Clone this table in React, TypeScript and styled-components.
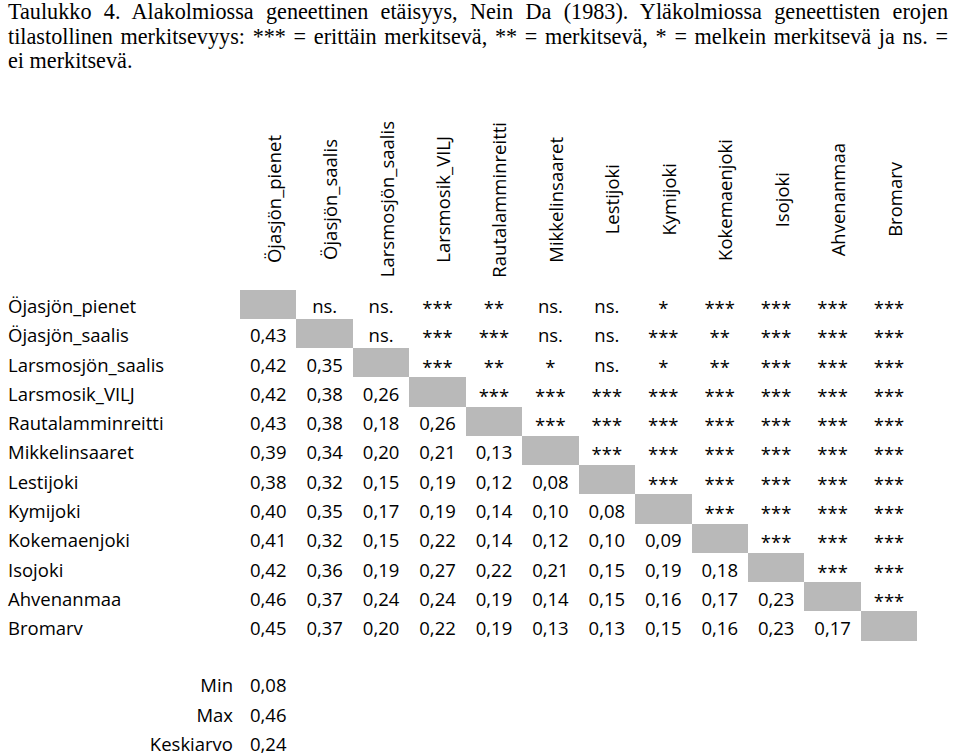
import React from "react";
import styled, { createGlobalStyle } from "styled-components";

const GlobalStyle = createGlobalStyle`
  html, body { margin: 0; padding: 0; background: #ffffff; }
  body { color: #000000; }
`;

const COL_W = 56.45;
const ROW_H = 29.27;

const Page = styled.div`
  width: 960px;
  box-sizing: border-box;
  padding-left: 8px;
`;

const Caption = styled.div`
  font-family: "Liberation Serif", "Times New Roman", serif;
  font-size: 22.2px;
  line-height: 24.5px;
  width: 940px;
`;

const CaptionLine = styled.div<{ $justify?: boolean }>`
  text-align: ${(p) => (p.$justify ? "justify" : "left")};
  text-align-last: ${(p) => (p.$justify ? "justify" : "left")};
`;

const Grid = styled.div<{ $top: number }>`
  display: grid;
  grid-template-columns: 232px repeat(12, ${COL_W}px);
  grid-auto-rows: ${ROW_H}px;
  margin-top: ${(p) => p.$top}px;
  font-family: "Open Sans", "Noto Sans", sans-serif;
  font-size: 18.5px;
  line-height: 18px;
`;

const HeaderRow = styled.div`
  display: grid;
  grid-template-columns: 232px repeat(12, ${COL_W}px);
  height: 180px;
  margin-top: 36px;
  font-family: "Open Sans", "Noto Sans", sans-serif;
  font-size: 18.5px;
`;

const HeaderCell = styled.div`
  display: flex;
  align-items: center;
  justify-content: center;
  padding-left: 10px;
`;

const VerticalText = styled.span`
  writing-mode: vertical-rl;
  transform: rotate(180deg);
  white-space: nowrap;
`;

const RowLabel = styled.div`
  display: flex;
  align-items: center;
  padding-top: 4px;
  box-sizing: border-box;
  white-space: nowrap;
`;

const StatLabel = styled(RowLabel)`
  justify-content: flex-end;
  padding-right: 7px;
`;

const Cell = styled.div<{ $diag?: boolean; $stars?: boolean }>`
  display: flex;
  align-items: center;
  justify-content: center;
  padding-top: ${(p) => (p.$stars ? 8 : 4)}px;
  box-sizing: border-box;
  white-space: nowrap;
  background: ${(p) => (p.$diag ? "#b9b9b9" : "transparent")};
`;

const Spacer = styled.div`
  grid-column: span 11;
`;

const labels = [
  "Öjasjön_pienet",
  "Öjasjön_saalis",
  "Larsmosjön_saalis",
  "Larsmosik_VILJ",
  "Rautalamminreitti",
  "Mikkelinsaaret",
  "Lestijoki",
  "Kymijoki",
  "Kokemaenjoki",
  "Isojoki",
  "Ahvenanmaa",
  "Bromarv",
];

const upper: string[][] = [
  ["ns.", "ns.", "***", "**", "ns.", "ns.", "*", "***", "***", "***", "***"],
  ["ns.", "***", "***", "ns.", "ns.", "***", "**", "***", "***", "***"],
  ["***", "**", "*", "ns.", "*", "**", "***", "***", "***"],
  ["***", "***", "***", "***", "***", "***", "***", "***"],
  ["***", "***", "***", "***", "***", "***", "***"],
  ["***", "***", "***", "***", "***", "***"],
  ["***", "***", "***", "***", "***"],
  ["***", "***", "***", "***"],
  ["***", "***", "***"],
  ["***", "***"],
  ["***"],
  [],
];

const lower: string[][] = [
  [],
  ["0,43"],
  ["0,42", "0,35"],
  ["0,42", "0,38", "0,26"],
  ["0,43", "0,38", "0,18", "0,26"],
  ["0,39", "0,34", "0,20", "0,21", "0,13"],
  ["0,38", "0,32", "0,15", "0,19", "0,12", "0,08"],
  ["0,40", "0,35", "0,17", "0,19", "0,14", "0,10", "0,08"],
  ["0,41", "0,32", "0,15", "0,22", "0,14", "0,12", "0,10", "0,09"],
  ["0,42", "0,36", "0,19", "0,27", "0,22", "0,21", "0,15", "0,19", "0,18"],
  ["0,46", "0,37", "0,24", "0,24", "0,19", "0,14", "0,15", "0,16", "0,17", "0,23"],
  ["0,45", "0,37", "0,20", "0,22", "0,19", "0,13", "0,13", "0,15", "0,16", "0,23", "0,17"],
];

const stats = [
  ["Min", "0,08"],
  ["Max", "0,46"],
  ["Keskiarvo", "0,24"],
];

export default function App() {
  return (
    <>
      <GlobalStyle />
      <Page>
        <Caption>
          <CaptionLine $justify>
            Taulukko 4. Alakolmiossa geneettinen etäisyys, Nein Da (1983). Yläkolmiossa geneettisten erojen
          </CaptionLine>
          <CaptionLine $justify>
            tilastollinen merkitsevyys: *** = erittäin merkitsevä, ** = merkitsevä, * = melkein merkitsevä ja ns. =
          </CaptionLine>
          <CaptionLine>ei merkitsevä.</CaptionLine>
        </Caption>

        <HeaderRow>
          <div />
          {labels.map((l) => (
            <HeaderCell key={l}>
              <VerticalText>{l}</VerticalText>
            </HeaderCell>
          ))}
        </HeaderRow>

        <Grid $top={0}>
          {labels.map((l, i) => (
            <React.Fragment key={l}>
              <RowLabel>{l}</RowLabel>
              {lower[i].map((v, j) => (
                <Cell key={"l" + j}>{v}</Cell>
              ))}
              <Cell $diag />
              {upper[i].map((v, j) => (
                <Cell key={"u" + j} $stars={v.startsWith("*")}>
                  {v}
                </Cell>
              ))}
            </React.Fragment>
          ))}
        </Grid>

        <Grid $top={28}>
          {stats.map(([k, v]) => (
            <React.Fragment key={k}>
              <StatLabel>{k}</StatLabel>
              <Cell>{v}</Cell>
              <Spacer />
            </React.Fragment>
          ))}
        </Grid>
      </Page>
    </>
  );
}
